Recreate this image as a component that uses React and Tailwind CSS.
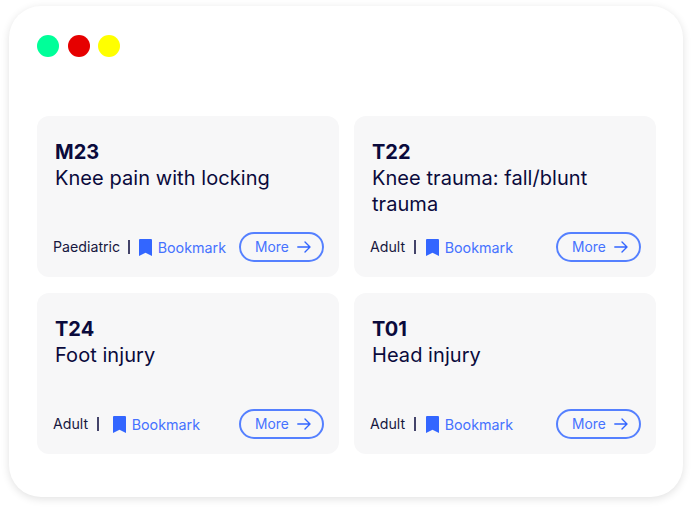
const font = "font-['Inter','Noto_Sans',sans-serif]";

function Bookmark() {
  return (
    <svg width="13" height="17" viewBox="0 0 13 17" className="shrink-0">
      <path d="M0 1.2C0 .5.5 0 1.2 0h10.6c.7 0 1.2.5 1.2 1.2V17l-6.5-3.2L0 17z" fill="#3366ff" />
    </svg>
  );
}

function Arrow() {
  return (
    <svg width="14" height="12" viewBox="0 0 14 12" fill="none" stroke="#3366ff" strokeWidth="1.4" strokeLinecap="round" strokeLinejoin="round">
      <path d="M.8 6h12M8 1l5 5-5 5" />
    </svg>
  );
}

function Card({ code, title, tag, barGap }) {
  return (
    <div className="h-[161px] rounded-[12px] bg-[#f7f7f8] flex flex-col pt-[24px] pb-[15px] pl-[18px] pr-[15px]">
      <div className="text-[20px] leading-[24px] font-bold text-[#0a0a3c]">{code}</div>
      <div className="mt-[1px] text-[20px] leading-[26px] text-[#0a0a3c] tracking-[0.06px]">{title}</div>
      <div className="mt-auto flex items-center h-[30px] -ml-[2px]">
        <span className="text-[14.2px] text-[#17173f]">{tag}</span>
        <span className={`w-[2px] h-[14px] bg-[#44446a] ${barGap}`}></span>
        <Bookmark />
        <span className="ml-[5.5px] text-[14.3px] text-[#4672ff] translate-y-px">Bookmark</span>
        <button className="ml-auto w-[85px] h-[30px] rounded-full border-2 border-[#5580ff] bg-transparent flex items-center justify-between pl-[14px] pr-[11px] text-[13.8px] text-[#4672ff]">
          More
          <Arrow />
        </button>
      </div>
    </div>
  );
}

export default function App() {
  return (
    <div className={`w-[692px] h-[509px] bg-white pt-[6px] pl-[9px] ${font}`}>
      <div className="w-[674px] h-[491px] rounded-[32px] bg-white shadow-[0_2px_8px_rgba(0,0,0,0.12)] pt-[29px] px-[28px]">
        <div className="flex h-[22px]">
          <span className="w-[22px] h-[22px] rounded-full bg-[#00ff99]"></span>
          <span className="ml-[9px] w-[22px] h-[22px] rounded-full bg-[#e60000]"></span>
          <span className="ml-[8px] w-[22px] h-[22px] rounded-full bg-[#ffff00]"></span>
        </div>
        <div className="mt-[59px] grid grid-cols-[302px_302px] gap-x-[15px] gap-y-[16px]">
          <Card code="M23" title="Knee pain with locking" tag="Paediatric" barGap="ml-[8px] mr-[9px]" />
          <Card code="T22" title="Knee trauma: fall/blunt trauma" tag="Adult" barGap="ml-[9px] mr-[10px]" />
          <Card code="T24" title="Foot injury" tag="Adult" barGap="ml-[9px] mr-[14px]" />
          <Card code="T01" title="Head injury" tag="Adult" barGap="ml-[9px] mr-[10px]" />
        </div>
      </div>
    </div>
  );
}
